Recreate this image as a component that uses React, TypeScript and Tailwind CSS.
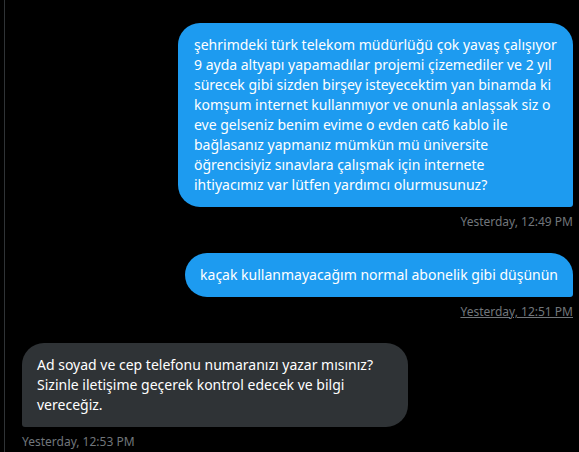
const font = { fontFamily: '"Noto Sans", "Open Sans", sans-serif' }

const Stamp = ({ text, underline, align }: { text: string; underline?: boolean; align: 'left' | 'right' }) => (
  <div className={`mt-[7px] text-[12px] leading-4 text-[#71767b] ${align === 'right' ? 'text-right' : 'text-left'}`}>
    <span className={underline ? 'underline' : ''}>{text}</span>
  </div>
)

const first = [
  'şehrimdeki türk telekom müdürlüğü çok yavaş çalışıyor',
  '9 ayda altyapı yapamadılar projemi çizemediler ve 2 yıl',
  'sürecek gibi sizden birşey isteyecektim yan binamda ki',
  'komşum internet kullanmıyor ve onunla anlaşsak siz o',
  'eve gelseniz benim evime o evden cat6 kablo ile',
  'bağlasanız yapmanız mümkün mü üniversite',
  'öğrencisiyiz sınavlara çalışmak için internete',
  'ihtiyacımız var lütfen yardımcı olurmusunuz?',
]

const reply = [
  'Ad soyad ve cep telefonu numaranızı yazar mısınız?',
  'Sizinle iletişime geçerek kontrol edecek ve bilgi',
  'vereceğiz.',
]

export default function App() {
  return (
    <div className="w-[579px] h-[452px] bg-black overflow-hidden" style={font}>
      <div className="ml-[4px] h-full border-l border-[#2f3336] pl-[17px] pr-[6px] pt-[23px]">
        {/* outgoing */}
        <div className="flex flex-col items-end">
          <div className="w-[395px] rounded-[22px] rounded-br-[3px] bg-[#1d9bf0] px-4 py-3 text-[14px] leading-5 text-white">
            {first.map((l) => (
              <div key={l} className="whitespace-nowrap">{l}</div>
            ))}
          </div>
          <Stamp text="Yesterday, 12:49 PM" align="right" />
        </div>

        <div className="mt-[23px] flex flex-col items-end">
          <div className="rounded-[22px] rounded-br-[3px] bg-[#1d9bf0] px-[15px] py-3 text-[14px] leading-5 text-white whitespace-nowrap">
            kaçak kullanmayacağım normal abonelik gibi düşünün
          </div>
          <Stamp text="Yesterday, 12:51 PM" underline align="right" />
        </div>

        {/* incoming */}
        <div className="mt-[23px] flex flex-col items-start">
          <div className="w-[386px] rounded-[22px] rounded-bl-[3px] bg-[#2f3336] px-[15px] py-3 text-[14px] leading-5 text-white">
            {reply.map((l) => (
              <div key={l} className="whitespace-nowrap">{l}</div>
            ))}
          </div>
          <Stamp text="Yesterday, 12:53 PM" align="left" />
        </div>
      </div>
    </div>
  )
}
